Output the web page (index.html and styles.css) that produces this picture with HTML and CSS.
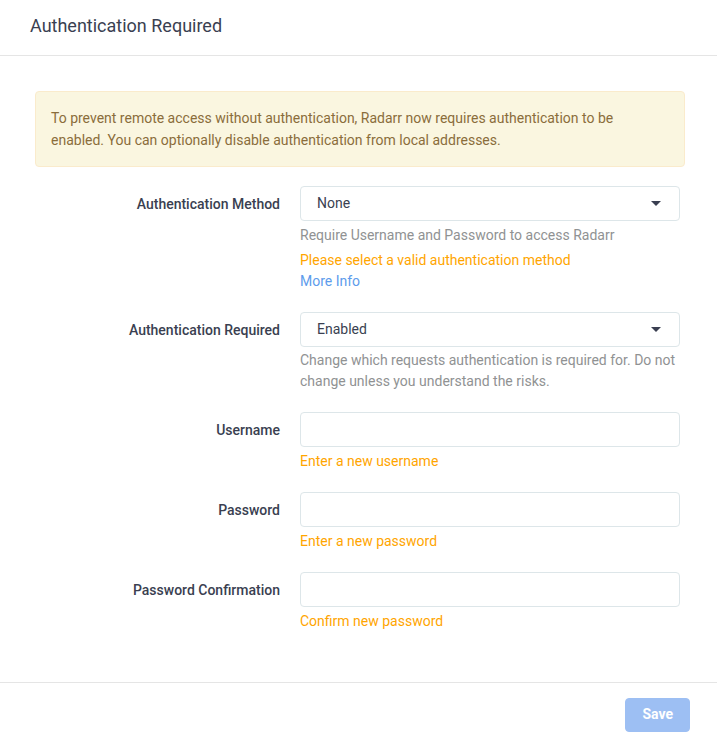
FILE: index.html
```html
<!DOCTYPE html>
<html lang="en">
<head>
    <meta charset="UTF-8">
    <meta name="viewport" content="width=device-width, initial-scale=1.0">
    <title>Authentication Required</title>
    <link rel="stylesheet" href="styles.css">
</head>
<body>
    <div class="modal">
        <div class="modal-header">Authentication Required</div>

        <div class="modal-body">
            <div class="alert">
                To prevent remote access without authentication, Radarr now requires authentication to be enabled. You can optionally disable authentication from local addresses.
            </div>

            <div class="form-group">
                <label class="form-label">Authentication Method</label>
                <div class="input-group">
                    <div class="select">
                        <span>None</span>
                        <span class="caret"></span>
                    </div>
                    <div class="help-text">Require Username and Password to access Radarr</div>
                    <div class="help-text warning">Please select a valid authentication method</div>
                    <a class="help-link" href="#">More Info</a>
                </div>
            </div>

            <div class="form-group">
                <label class="form-label">Authentication Required</label>
                <div class="input-group">
                    <div class="select">
                        <span>Enabled</span>
                        <span class="caret"></span>
                    </div>
                    <div class="help-text tight">Change which requests authentication is required for. Do not change unless you understand the risks.</div>
                </div>
            </div>

            <div class="form-group">
                <label class="form-label" for="username">Username</label>
                <div class="input-group">
                    <input class="text-input" type="text" id="username">
                    <div class="help-text warning">Enter a new username</div>
                </div>
            </div>

            <div class="form-group">
                <label class="form-label" for="password">Password</label>
                <div class="input-group">
                    <input class="text-input" type="password" id="password">
                    <div class="help-text warning">Enter a new password</div>
                </div>
            </div>

            <div class="form-group">
                <label class="form-label" for="passwordConfirmation">Password Confirmation</label>
                <div class="input-group">
                    <input class="text-input" type="password" id="passwordConfirmation">
                    <div class="help-text warning">Confirm new password</div>
                </div>
            </div>
        </div>

        <div class="modal-footer">
            <button class="btn-save" disabled>Save</button>
        </div>
    </div>
</body>
</html>
```

FILE: styles.css
```css
body {
    margin: 0;
    padding: 0;
    font-family: Roboto, "Liberation Sans", sans-serif;
    font-size: 14px;
    line-height: 1.528571429;
    color: #515253;
    background: #fff;
    overflow: hidden;
}
.modal {
    width: 720px;
}
.modal-header {
    padding: 13px 30px 17px;
    font-size: 18px;
    line-height: 25px;
    color: #3a3f51;
    border-bottom: 1px solid #e5e5e5;
}
.modal-body {
    padding: 35px 30px 30px;
}
.alert {
    margin: 0 5px 19px;
    padding: 15px;
    border: 1px solid #faebcc;
    border-radius: 4px;
    background-color: #faf6e0;
    color: #8a6d3b;
    line-height: 22px;
}
.form-group {
    display: flex;
    margin-bottom: 20px;
}
.form-label {
    flex: 0 0 250px;
    margin-top: 1px;
    margin-right: 20px;
    text-align: right;
    font-weight: 500;
    color: #3a3f51;
    line-height: 35px;
}
.input-group {
    flex: 0 0 380px;
}
.select,
.text-input {
    display: flex;
    align-items: center;
    justify-content: space-between;
    box-sizing: border-box;
    width: 100%;
    height: 35px;
    padding: 0 18px 0 16px;
    border: 1px solid #dde6e9;
    border-radius: 4px;
    background: #fff;
    color: #3a3f51;
    font-family: inherit;
    font-size: 14px;
}
.caret {
    width: 0;
    height: 0;
    border-left: 5px solid transparent;
    border-right: 5px solid transparent;
    border-top: 5px solid #3a3f51;
}
.help-text {
    margin-top: 4px;
    color: #909293;
    line-height: 21px;
}
.help-text.tight {
    margin-top: 3px;
}
.help-text.warning {
    color: #ffa500;
}
.help-link {
    display: block;
    color: #5d9cec;
    text-decoration: none;
    line-height: 21px;
}
.modal-footer {
    display: flex;
    justify-content: flex-end;
    padding: 15px 30px;
    border-top: 1px solid #e5e5e5;
}
.btn-save {
    padding: 6px 16px;
    border: 1px solid #9dbff3;
    border-radius: 4px;
    background-color: #9dbff3;
    color: #fff;
    font-family: inherit;
    font-size: 14px;
    font-weight: bold;
    line-height: 1.4;
}
```
